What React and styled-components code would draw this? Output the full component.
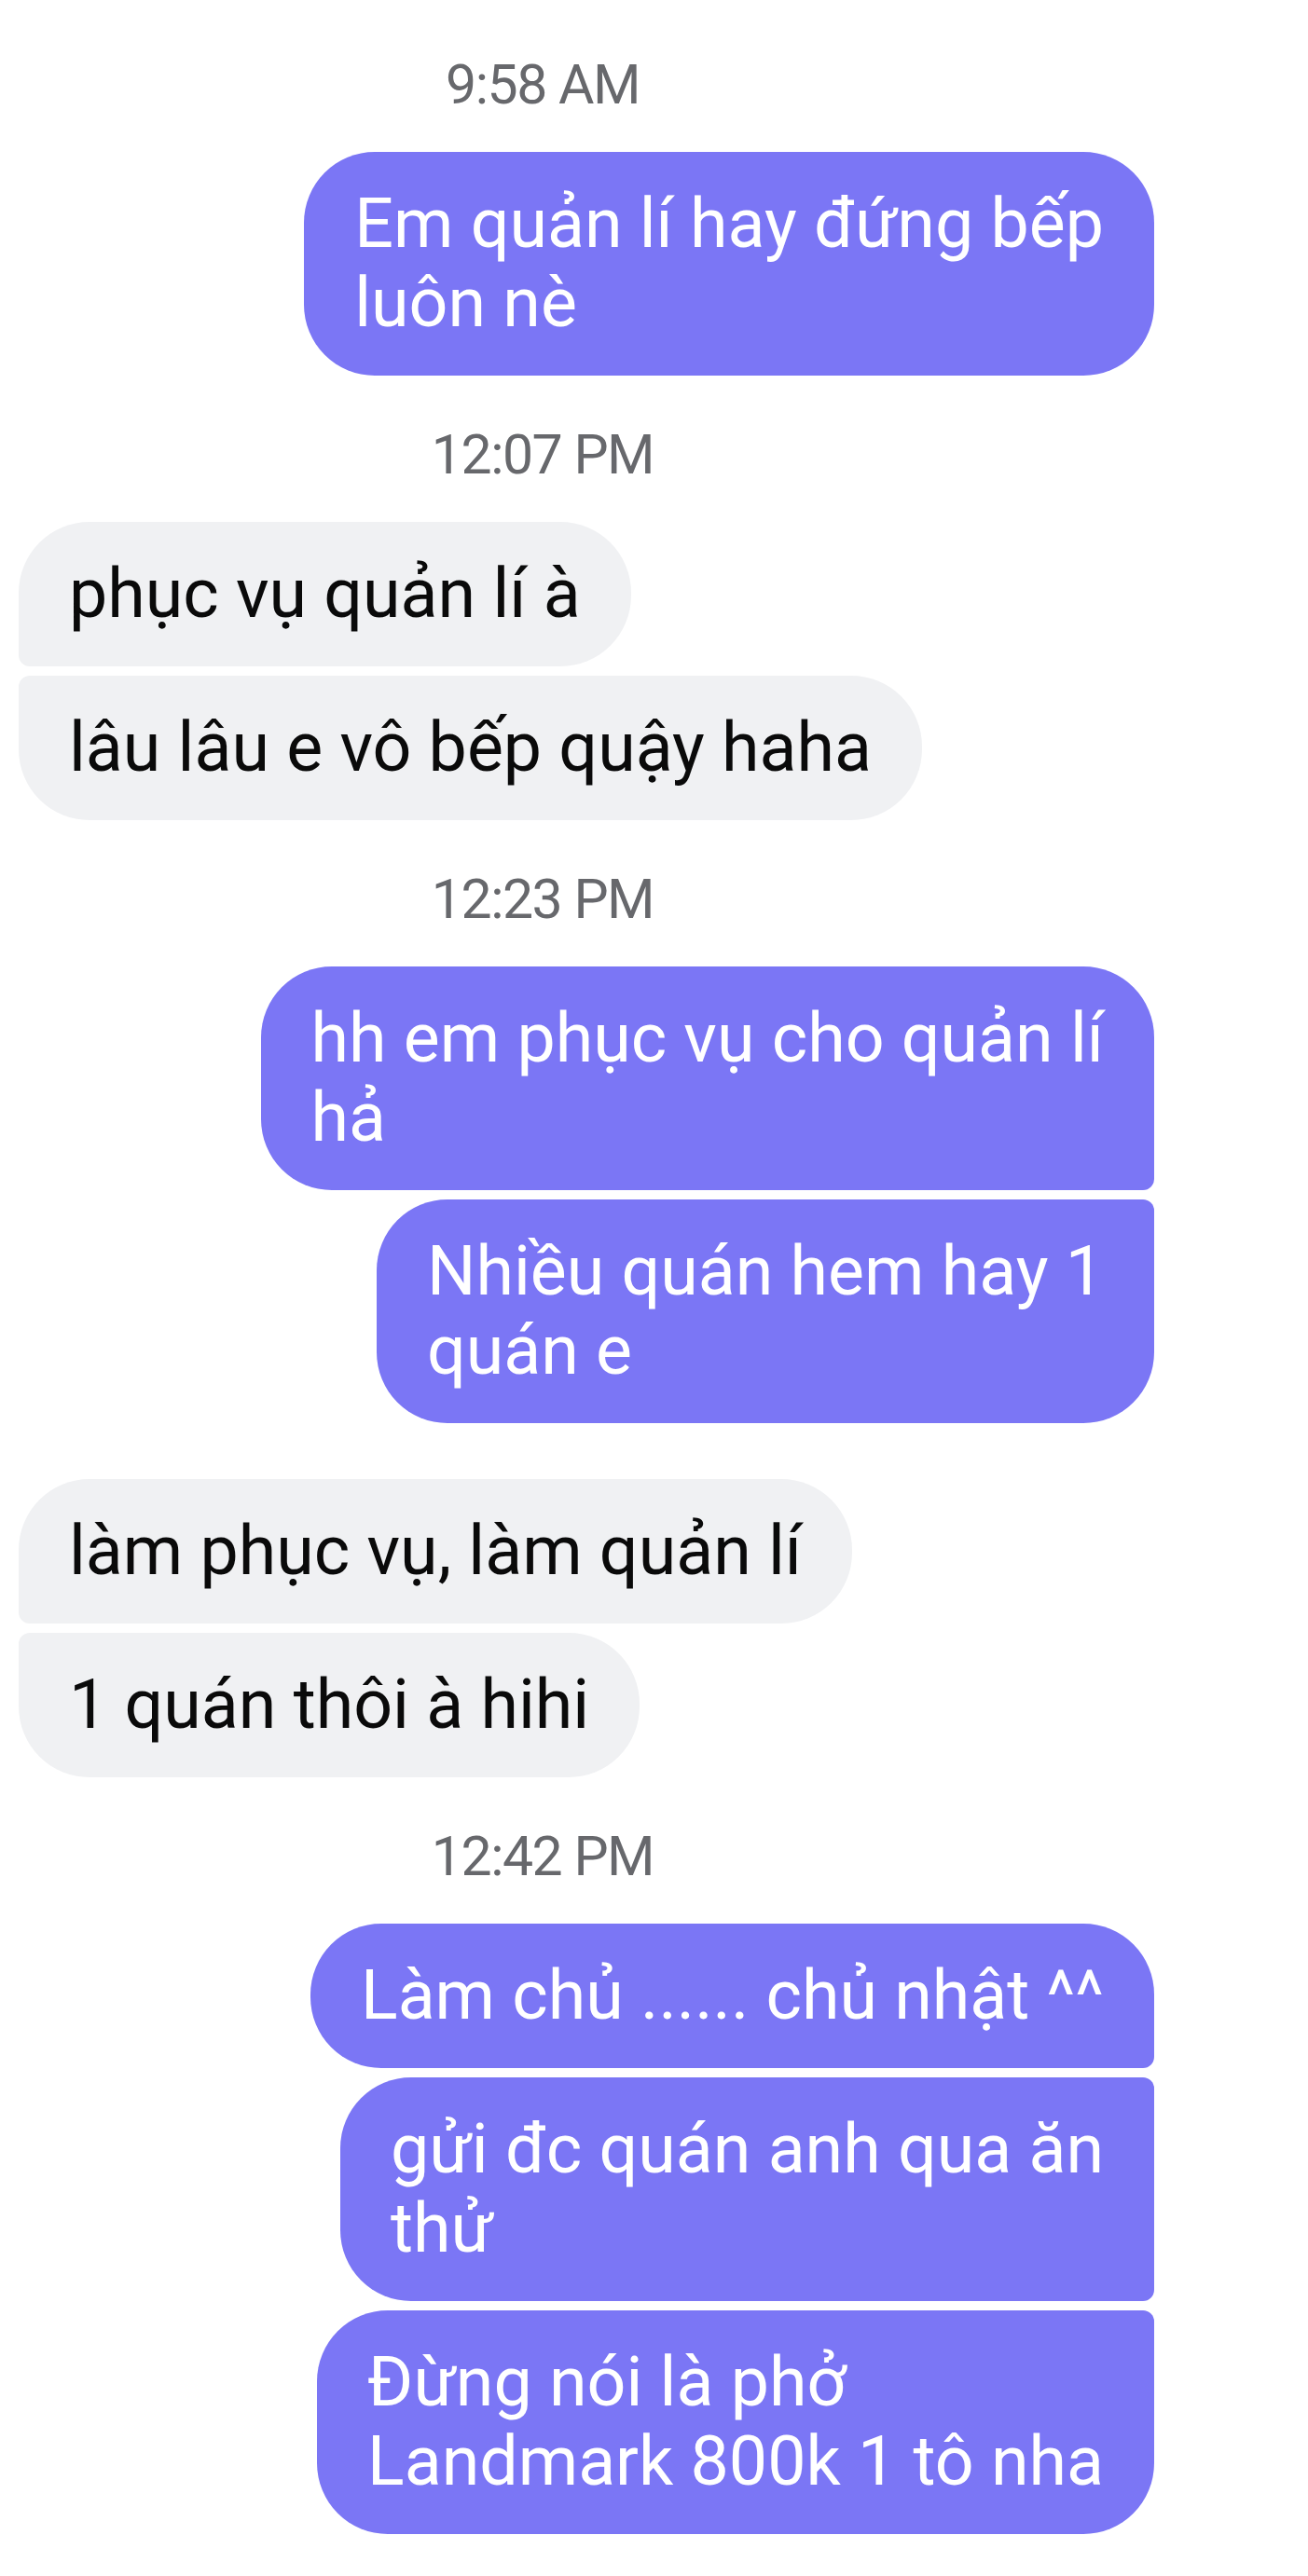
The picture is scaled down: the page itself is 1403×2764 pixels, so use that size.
import React from "react";
import styled, { createGlobalStyle, css } from "styled-components";

const GlobalStyle = createGlobalStyle`
  html, body {
    margin: 0;
    padding: 0;
    background: #ffffff;
  }
  body {
    font-family: Roboto, "Noto Sans", "Liberation Sans", sans-serif;
    -webkit-font-smoothing: antialiased;
  }
`;

const Thread = styled.main`
  display: flex;
  flex-direction: column;
  padding: 56px 165px 40px 20px;
  box-sizing: border-box;
  width: 1403px;
  min-height: 2764px;
  background: #ffffff;
`;

const Timestamp = styled.div`
  margin: 50px 94px 38px 0;
  text-align: center;
  font-size: 59px;
  line-height: 69px;
  letter-spacing: -1.5px;
  color: #67686c;
  &:first-child {
    margin-top: 0;
  }
`;

const Group = styled.div`
  display: flex;
  flex-direction: column;
  gap: 10px;
  align-items: ${(p) => (p.$outgoing ? "flex-end" : "flex-start")};
  & + & {
    margin-top: 60px;
  }
`;

const BIG = "76px";
const SMALL = "12px";

const radius = (outgoing, pos) => {
  const top = pos === "single" || pos === "first" ? BIG : SMALL;
  const bottom = pos === "single" || pos === "last" ? BIG : SMALL;
  if (outgoing) {
    return css`
      border-radius: ${BIG} ${top} ${bottom} ${BIG};
    `;
  }
  return css`
    border-radius: ${top} ${BIG} ${BIG} ${bottom};
  `;
};

const Bubble = styled.div`
  box-sizing: border-box;
  padding: 35px 54px 35px 54px;
  font-size: 73.5px;
  line-height: 85px;
  white-space: nowrap;
  background: ${(p) => (p.$outgoing ? "#7b76f5" : "#f0f1f3")};
  color: ${(p) => (p.$outgoing ? "#ffffff" : "#0a0a0a")};
  ${(p) => radius(p.$outgoing, p.$pos)}
`;

const conversation = [
  { type: "time", text: "9:58 AM" },
  { type: "group", outgoing: true, messages: [["Em quản lí hay đứng bếp", "luôn nè"]] },
  { type: "time", text: "12:07 PM" },
  {
    type: "group",
    outgoing: false,
    messages: [["phục vụ quản lí à"], ["lâu lâu e vô bếp quậy haha"]],
  },
  { type: "time", text: "12:23 PM" },
  {
    type: "group",
    outgoing: true,
    messages: [
      ["hh em phục vụ cho quản lí", "hả"],
      ["Nhiều quán hem hay 1", "quán e"],
    ],
  },
  {
    type: "group",
    outgoing: false,
    messages: [["làm phục vụ, làm quản lí"], ["1 quán thôi à hihi"]],
  },
  { type: "time", text: "12:42 PM" },
  {
    type: "group",
    outgoing: true,
    messages: [
      ["Làm chủ ...... chủ nhật ^^"],
      ["gửi đc quán anh qua ăn", "thử"],
      ["Đừng nói là phở", "Landmark 800k 1 tô nha"],
    ],
  },
];

const position = (i, n) => {
  if (n === 1) return "single";
  if (i === 0) return "first";
  if (i === n - 1) return "last";
  return "middle";
};

export default function App() {
  return (
    <>
      <GlobalStyle />
      <Thread>
        {conversation.map((item, idx) =>
          item.type === "time" ? (
            <Timestamp key={idx}>{item.text}</Timestamp>
          ) : (
            <Group key={idx} $outgoing={item.outgoing}>
              {item.messages.map((lines, i) => (
                <Bubble
                  key={i}
                  $outgoing={item.outgoing}
                  $pos={position(i, item.messages.length)}
                >
                  {lines.map((line, j) => (
                    <React.Fragment key={j}>
                      {j > 0 && <br />}
                      {line}
                    </React.Fragment>
                  ))}
                </Bubble>
              ))}
            </Group>
          )
        )}
      </Thread>
    </>
  );
}
